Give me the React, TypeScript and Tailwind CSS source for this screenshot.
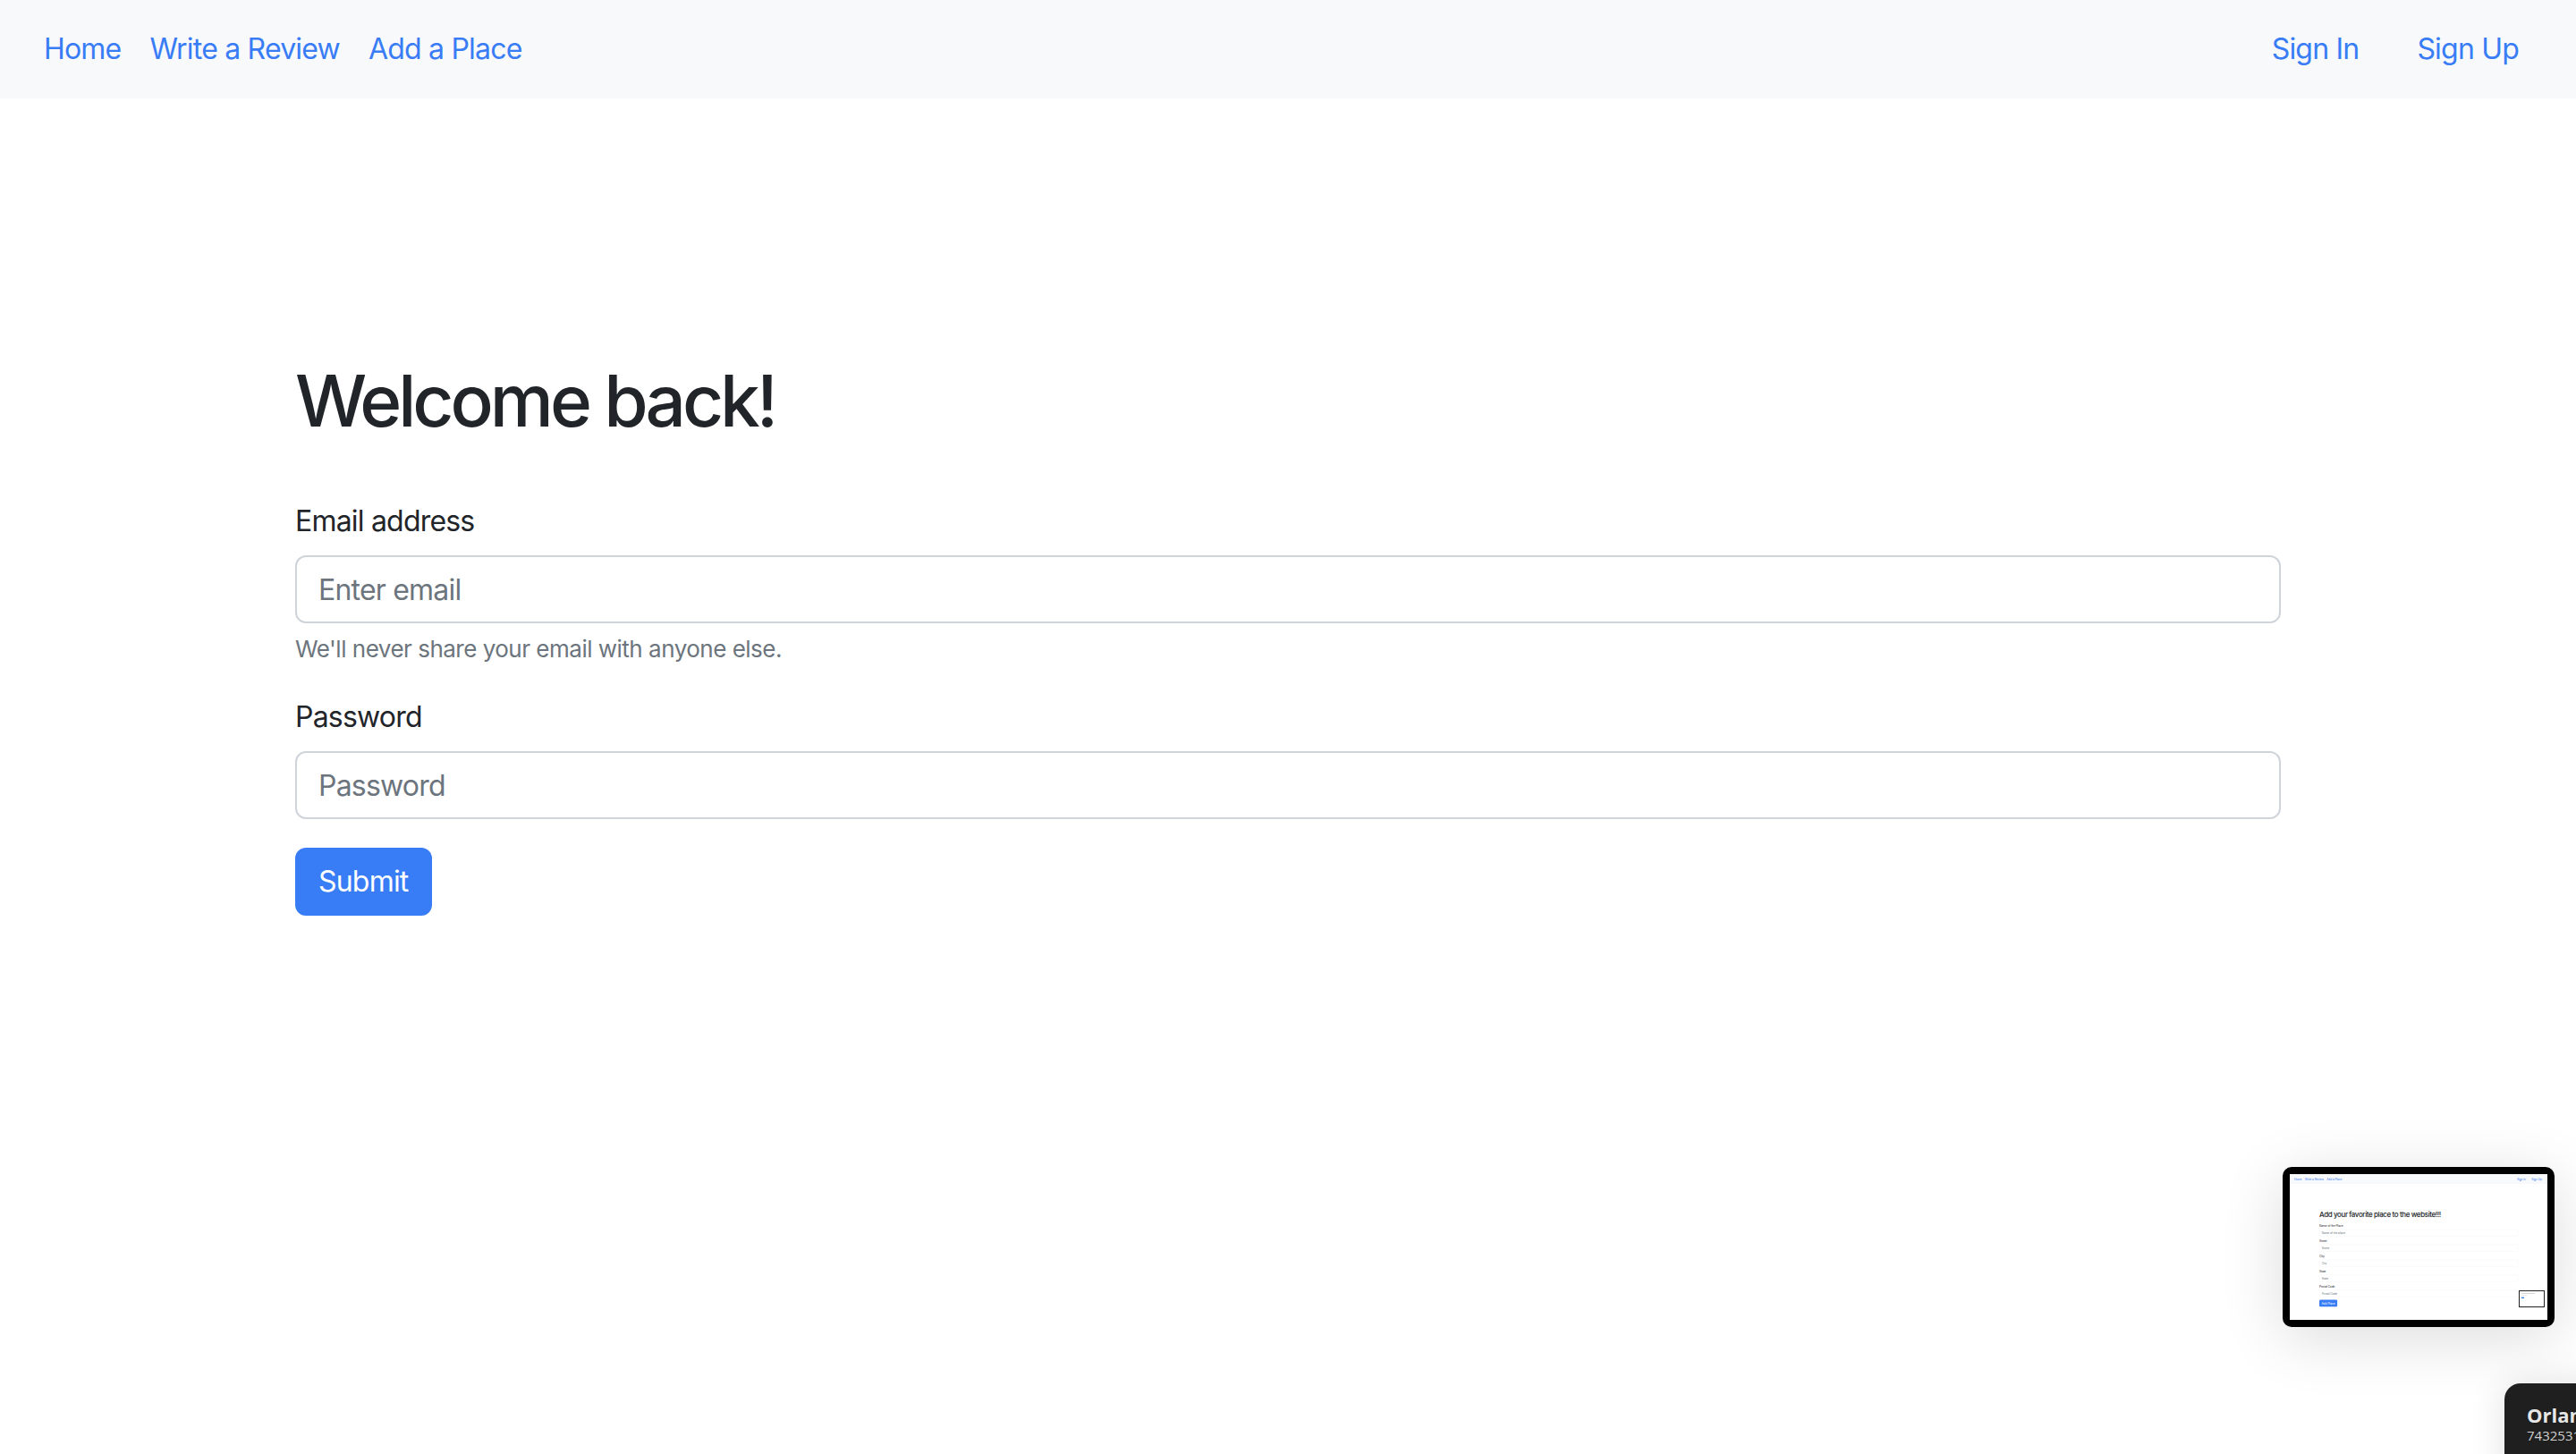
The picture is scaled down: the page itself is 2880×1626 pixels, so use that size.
import type { ReactNode } from 'react';

const links = ['Home', 'Write a Review', 'Add a Place'];

function Navbar() {
  return (
    <nav className="flex h-[110px] items-center justify-between bg-[#f8f9fa] pl-[33px] pr-[48px]">
      <div className="flex items-center">
        {links.map(l => (
          <a key={l} className="px-4 text-[32px] leading-[48px] tracking-[-0.8px] text-[#387cf6]">{l}</a>
        ))}
      </div>
      <div className="flex items-center gap-[33px]">
        <a className="px-4 text-[32px] leading-[48px] tracking-[-0.8px] text-[#387cf6]">Sign In</a>
        <a className="px-4 text-[32px] leading-[48px] tracking-[-0.8px] text-[#387cf6]">Sign Up</a>
      </div>
    </nav>
  );
}

function Field({ label, placeholder, type = 'text', help, faint }: {
  label: string; placeholder: string; type?: string; help?: ReactNode; faint?: boolean;
}) {
  return (
    <div className="mb-8">
      <label className="mb-[14px] block text-[32px] leading-[48px] tracking-[-0.8px] text-[#212529]">{label}</label>
      <input
        type={type}
        placeholder={placeholder}
        className={`block h-[76px] w-full rounded-[12px] border-2 bg-white px-6 text-[32px] tracking-[-0.8px] text-[#212529] outline-none placeholder:text-[#6c757d] ${
          faint ? 'border-[#e3e6ea]' : 'border-[#ced4da]'
        }`}
      />
      {help && <div className="mt-[9px] text-[26px] leading-[40px] tracking-[-0.5px] text-[#6c757d]">{help}</div>}
    </div>
  );
}

// the little recursive preview shown inside the thumbnail
function TinyPreview() {
  return (
    <div className="absolute left-[2560px] top-[1300px] h-[190px] w-[290px] border-[10px] border-[#222] bg-white p-[20px]">
      <div className="h-[8px] w-[150px] bg-[#c9ccd0]" />
      <div className="mt-[12px] h-[6px] w-[60px] bg-[#dadde0]" />
      <div className="mt-[20px] h-[14px] w-[30px] bg-[#387cf6]" />
    </div>
  );
}

function MiniPage() {
  return (
    <div className="relative h-[1626px] w-[2880px] origin-top-left scale-[0.1] bg-white">
      <Navbar />
      <main className="mx-auto w-[2220px] pt-[292px]">
        <h2 className="mb-[58px] text-[80px] font-medium leading-[96px] tracking-[-4px] text-[#212529]">
          Add your favorite place to the website!!!
        </h2>
        <Field label="Name of the Place" placeholder="Name of the place" faint />
        <Field label="Street" placeholder="Street" faint />
        <Field label="City" placeholder="City" faint />
        <Field label="State" placeholder="State" faint />
        <Field label="Postal Code" placeholder="Postal Code" faint />
        <button className="h-[76px] rounded-[12px] bg-[#387cf6] px-6 text-[32px] text-white">Add Place</button>
      </main>
      <TinyPreview />
    </div>
  );
}

export default function App() {
  return (
    <div className="relative h-[1626px] w-[2880px] overflow-hidden bg-white font-[family-name:Inter,sans-serif]">
      <Navbar />

      <main className="mx-auto w-[2220px] pt-[290px]">
        <h1 className="mb-[63px] text-[80px] font-medium leading-[96px] tracking-[-4px] text-[#212529]">Welcome back!</h1>
        <form onSubmit={e => e.preventDefault()}>
          <Field
            label="Email address"
            placeholder="Enter email"
            type="email"
            help="We'll never share your email with anyone else."
          />
          <Field label="Password" placeholder="Password" type="password" />
          <button
            type="submit"
            className="h-[76px] rounded-[12px] border-2 border-[#387cf6] bg-[#387cf6] px-6 text-[32px] leading-[48px] tracking-[-0.8px] text-white"
          >
            Submit
          </button>
        </form>
      </main>

      {/* page preview thumbnail */}
      <div className="absolute left-[2552px] top-[1305px] h-[179px] w-[304px] rounded-[10px] bg-black p-[8px] shadow-[0_12px_70px_rgba(0,0,0,0.14)]">
        <div className="h-[163px] w-[288px] overflow-hidden bg-white">
          <MiniPage />
        </div>
      </div>

      {/* user badge, cut off by the window edge */}
      <div className="absolute left-[2800px] top-[1547px] h-[120px] w-[240px] rounded-tl-[18px] bg-[#1f1f1f] pl-[25px] pt-[22px] font-[family-name:'Open_Sans',sans-serif] shadow-[0_0_40px_rgba(0,0,0,0.12)]">
        <div className="whitespace-nowrap text-[22px] font-bold leading-[26px] text-[#e6e6e6]">Orlando</div>
        <div className="whitespace-nowrap text-[15px] leading-[20px] text-[#d0d0d0]">7432531098</div>
      </div>
    </div>
  );
}
